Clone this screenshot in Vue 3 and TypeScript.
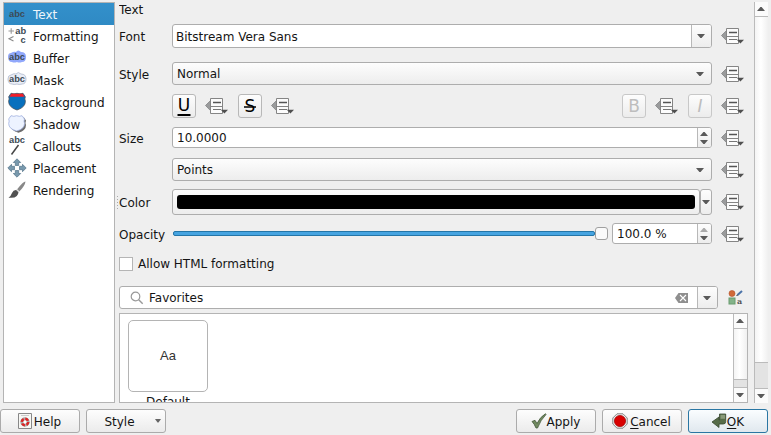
<script setup lang="ts">
import { h, type FunctionalComponent } from 'vue'

interface Section { name: string; icon: string }

const sections: Section[] = [
  { name: 'Text', icon: 'text' },
  { name: 'Formatting', icon: 'formatting' },
  { name: 'Buffer', icon: 'buffer' },
  { name: 'Mask', icon: 'mask' },
  { name: 'Background', icon: 'background' },
  { name: 'Shadow', icon: 'shadow' },
  { name: 'Callouts', icon: 'callouts' },
  { name: 'Placement', icon: 'placement' },
  { name: 'Rendering', icon: 'rendering' },
]

const Override: FunctionalComponent = () =>
  h('svg', { width: 24, height: 18, viewBox: '0 0 24 18' }, [
    h('path', { d: 'M.5 8.500L5.500 3.600v10z', fill: '#9a9b9c', stroke: '#808183', 'stroke-width': 0.8 }),
    h('path', { d: 'M5.500 1.500h12v15h-12zM5.500 9.500h12', fill: '#fcfcfc', stroke: '#858585' }),
    h('path', { d: 'M8 5.500h8', stroke: '#555', 'stroke-width': 1.500 }),
    h('path', { d: 'M8 12.500h8', stroke: '#777' }),
    h('path', { d: 'M15.800 12.800h7.200l-3.600 3.600z', fill: '#505050' }),
  ])

const Arrow: FunctionalComponent<{ up?: boolean; dim?: boolean }> = (props) =>
  h('svg', { width: 8, height: 4, viewBox: '0 0 8 4' }, [
    h('path', { d: props.up ? 'M0 4h8L4.6 0h-1.2z' : 'M0 0h8L4.6 4h-1.2z', fill: props.dim ? '#aaa' : '#5a5a5a' }),
  ])
Arrow.props = { up: Boolean, dim: Boolean }
</script>

<template>
  <div class="dialog">
    <div class="body">
      <nav class="sections">
        <div v-for="(s, i) in sections" :key="s.name" class="section" :class="{ selected: i === 0 }">
          <svg class="sicon" width="20" height="20" viewBox="0 0 20 20">
            <template v-if="s.icon === 'text'">
              <text x="10" y="13" class="abc">abc</text>
            </template>
            <template v-else-if="s.icon === 'formatting'">
              <path d="M1.500 5h5.500M4.200 2.200v5.500" stroke="#999" stroke-width="1.100" />
              <text x="13.800" y="7.500" class="abc">ab</text>
              <path d="M6.500 10.500l-4.500 2.300 4.500 2.300" fill="none" stroke="#888" stroke-width="1.100" />
              <text x="16.200" y="16.500" class="abc">c</text>
            </template>
            <template v-else-if="s.icon === 'buffer'">
              <path d="M4 5q3-2 5-1 2-3 5 0 5 0 5 5t-4 5q-3 1-5 0-3 1-5 0-4 0-4-5 0-4 3-4z" fill="#91a8fb" />
              <text x="10" y="12.400" class="abc">abc</text>
            </template>
            <template v-else-if="s.icon === 'mask'">
              <path d="M4 5q3-2 5-1 2-3 5 0 5 0 5 5t-4 5q-3 1-5 0-3 1-5 0-4 0-4-5 0-4 3-4z" fill="#e9edf6" stroke="#b0bace" stroke-width=".8" />
              <text x="10" y="12.400" class="abc">abc</text>
            </template>
            <template v-else-if="s.icon === 'background'">
              <path d="M4 1.300q3 1 6 0 3 1 6 0l2.300 3.500q-1 2 .1 4.500 0 6-8.400 8.700Q1.600 15.300 1.600 9.300q1.100-2.500.1-4.500z" fill="#0870bd" stroke="#45505b" stroke-width=".8" />
              <path d="M4.200 1.800h11.600L17.500 4.800h-15z" fill="#f21d28" />
            </template>
            <template v-else-if="s.icon === 'shadow'">
              <path d="M5 3.500q3 1.500 6 0 3 1.500 6 0l2 3q-1 2 0 4.500 0 5.500-7.500 7.800Q4 16.500 3 11z" fill="#6b6b6b" />
              <path d="M4 1.700q3 1.300 5.500 0 3 1.300 5.500 0L17.500 5q-1 2 0 4.500 0 5.500-7.800 7.500Q1.700 15 1.700 9.500q1-2.500 0-4.500z" fill="#edf3ff" stroke="#9fb0e0" stroke-width=".8" />
            </template>
            <template v-else-if="s.icon === 'callouts'">
              <text x="10" y="6.800" class="abc">abc</text>
              <path d="M11.500 9L4.500 18.500" stroke="#444" stroke-width="1.500" />
            </template>
            <template v-else-if="s.icon === 'placement'">
              <path d="M10 .8l3.700 3.700h-2v3H8.300v-3h-2zM10 19.200l3.700-3.700h-2v-3H8.300v3h-2zM.8 10l3.700-3.700v2h3v3.400h-3v2zM19.200 10l-3.700-3.700v2h-3v3.400h3v2z" fill="#7899ad" stroke="#547489" stroke-width=".7" />
            </template>
            <template v-else>
              <path d="M18.500 1.500q-2.500 0-8.500 8l2.200 2Q18 6 18.500 1.500z" fill="#888" />
              <path d="M9.500 10q-3-.5-4.500 3-1 3-3.500 4.700 6 .7 8.300-1.700 1.700-2 1.700-4z" fill="#515151" />
              <path d="M9.500 9.500l2.500 2.300" stroke="#ddd" stroke-width="1.200" />
            </template>
          </svg>
          <span>{{ s.name }}</span>
        </div>
      </nav>
      <div class="grip"></div>

      <main class="page">
        <h1>Text</h1>
        <div class="form">
          <label>Font</label>
          <div class="box white font"><span class="val edit">Bitstream Vera Sans</span><span class="drop"><Arrow /></span></div>
          <Override />

          <label>Style</label>
          <div class="box"><span class="val">Normal</span><Arrow class="inset" /></div>
          <Override />

          <span></span>
          <div class="toggles">
            <button class="tog"><svg width="22" height="22"><text x="11" y="16" class="glyph">U</text><path d="M4.500 20h13" stroke="#000" stroke-width="2" /></svg></button>
            <Override />
            <button class="tog"><svg width="22" height="22"><text x="11" y="17" class="glyph">S</text><path d="M5 12h12" stroke="#000" stroke-width="1.500" /></svg></button>
            <Override />
            <button class="tog off push"><svg width="22" height="22"><text x="11" y="17" class="glyph">B</text></svg></button>
            <Override />
            <button class="tog off"><svg width="22" height="22"><text x="11" y="17" class="glyph it">I</text></svg></button>
          </div>
          <Override />

          <label class="up">Size</label>
          <div class="box white short"><span class="val">10.0000</span><span class="spin"><Arrow up /><Arrow /></span></div>
          <Override class="high" />

          <span></span>
          <div class="box"><span class="val">Points</span><Arrow class="inset" /></div>
          <Override />

          <label class="down">Color</label>
          <div class="colour"><div class="box swatchbox"><div class="swatch"></div></div><div class="box mini"><Arrow /></div></div>
          <Override class="low" />

          <label class="up">Opacity</label>
          <div class="opacity">
            <div class="slider"><div class="track"></div><div class="thumb"></div></div>
            <div class="box white pct"><span class="val">100.0 %</span><span class="spin"><Arrow up dim /><Arrow /></span></div>
          </div>
          <Override class="high" />
        </div>

        <label class="check"><span class="cb"></span>Allow HTML formatting</label>

        <div class="searchrow">
          <div class="box white search">
            <svg class="lens" width="14" height="14" viewBox="0 0 14 14"><circle cx="5.500" cy="5.500" r="4.300" fill="none" stroke="#999" stroke-width="1.200" /><path d="M8.700 8.700l4 4" stroke="#999" stroke-width="1.400" /></svg>
            <span class="val">Favorites</span>
            <svg class="clear" width="13" height="10" viewBox="0 0 13 10"><path d="M3.500 0H13v10H3.500L0 5z" fill="#8f8f8f" /><path d="M5 2l6 6M11 2L5 8" stroke="#fff" stroke-width="1.100" /></svg>
            <span class="drop"><Arrow /></span>
          </div>
          <svg width="15" height="15" viewBox="0 0 15 15"><circle cx="4" cy="3.500" r="3" fill="#d06a3a" stroke="#b4532a" stroke-width=".6" /><path d="M9.500 5L14 1" stroke="#4a72a8" stroke-width="2" /><path d="M8 6l2.200-.5-1-1z" fill="#333" /><rect x="1" y="8" width="6" height="6" fill="#83b389" stroke="#6a9c70" /><text x="9" y="14" class="serif">a</text></svg>
        </div>

        <div class="gallery">
          <div class="cards"><div class="card">Aa</div><div class="name">Default</div></div>
          <div class="scroll inner"><span class="sb"><Arrow up /></span><span class="bar"></span><span class="groove"></span><span class="sb"><Arrow /></span></div>
        </div>
      </main>

      <div class="scroll outer"><span class="sb"><Arrow up /></span><span class="bar"></span><span class="groove"></span><span class="sb"><Arrow /></span></div>
    </div>

    <footer>
      <button class="btn">
        <svg width="14" height="16" viewBox="0 0 14 16"><path d="M.5.500h13v15H.500z" fill="#f7f7f4" stroke="#888" /><path d="M3 2.500h8" stroke="#ccc" /><circle cx="7" cy="9" r="3.200" fill="#fff" stroke="#aaa" stroke-width="3" /><circle cx="7" cy="9" r="3.200" fill="none" stroke="#dc2525" stroke-width="2.500" stroke-dasharray="3.300 1.700" /></svg>
        <span>Help</span>
      </button>
      <button class="btn style"><span>Style</span><svg width="6" height="4"><path d="M0 0h6L3.500 3.500h-1z" fill="#666" /></svg></button>
      <button class="btn apply">
        <svg width="16" height="16" viewBox="0 0 16 16"><path d="M1 8.500l3-1.200 2 3.200Q9 4 14.500.7L15 1.500Q9.500 7 6.500 15H5Q3.500 11 1 8.500z" fill="#718a60" stroke="#43583a" stroke-width=".8" /></svg>
        <span>Apply</span>
      </button>
      <button class="btn">
        <svg class="stop" width="16" height="16" viewBox="0 0 16 16"><path d="M5 .8h6L15.200 5v6L11 15.200H5L.8 11V5z" fill="#eee" stroke="#858585" /><circle cx="8" cy="8" r="5.600" fill="#d90000" stroke="#9c0000" stroke-width=".7" /></svg>
        <span><u>C</u>ancel</span>
      </button>
      <button class="btn ok">
        <svg width="16" height="16" viewBox="0 0 16 16"><path d="M8.500 1h6.200v7.500q0 2.500-2.500 2.500H8v3.500L1 9l7-5v3h.5z" fill="#566c49" stroke="#35462d" stroke-width=".8" /><path d="M9.500 1.800h4.500v4H9.500z" fill="#899a79" /></svg>
        <span><u>O</u>K</span>
      </button>
    </footer>
  </div>
</template>

<style>
body { margin: 0; background: #efefef; }
</style>

<style scoped>
* { box-sizing: border-box; }
.dialog { width: 771px; height: 435px; overflow: hidden; background: #efefef; color: #141414; font: 12px/16px "DejaVu Sans", sans-serif; }
svg { display: block; flex: none; }
button { font: inherit; color: inherit; padding: 0; }
.body { display: flex; height: 403px; padding: 2px 0 0 3px; }
.sections { width: 112px; height: 401px; border: 1px solid #b4b4b4; background: #fff; flex: none; }
.section { height: 22px; display: flex; align-items: center; padding-left: 3px; gap: 6px; }
.section span { padding-top: 2px; }
.selected { background: linear-gradient(#3390cb, #2f8ac4); color: #eef5fa; }
.abc { font: bold 9.300px "Liberation Sans", sans-serif; text-anchor: middle; fill: #3d4b54; }
.grip { width: 4px; height: 16px; margin-top: 193px; background: radial-gradient(circle at 2.500px 1.500px, #aaa .6px, transparent .8px) 0 0 / 4px 3px; flex: none; }
.page { width: 629px; height: 401px; flex: none; overflow: hidden; }
h1 { font: inherit; margin: 0; height: 22px; }
.form { display: grid; grid-template-columns: 53px 540px 33px; grid-template-rows: 38px 32px 33px 31px 31px 34px 21px; align-items: start; }
.form > svg { margin: 3px 0 0 9px; }
.form > svg.high { margin-top: 2px; }
.form > svg.low { margin-top: 4px; }
.form > label { padding-top: 5px; white-space: nowrap; }
.form > label.up { padding-top: 4px; }
.form > label.down { padding-top: 6px; }
.box { display: flex; align-items: center; height: 23px; border: 1px solid #adadad; border-radius: 3px; background: linear-gradient(#fdfdfd, #ededed); overflow: hidden; }
.white { background: #fff; }
.val { flex: 1; padding-left: 4px; white-space: nowrap; color: #141414; }
.edit { padding-left: 3px; padding-top: 1px; }
.font { height: 24px; }
.short { height: 21px; }
.inset { margin-right: 7px; }
.drop { width: 20px; height: 100%; border-left: 1px solid #b8b8b8; display: flex; align-items: center; padding-left: 5px; background: linear-gradient(#fdfdfd, #ededed); }
.spin { width: 14px; height: 100%; border-left: 1px solid #b8b8b8; display: flex; flex-direction: column; align-items: center; justify-content: center; gap: 4px; padding-right: 1px; background: linear-gradient(#fdfdfd, #ededed); }
.toggles { display: flex; align-items: center; gap: 9px; height: 24px; }
.tog { width: 24px; height: 24px; border: 1px solid #b8b8b8; border-radius: 3px; background: linear-gradient(#fdfdfd, #ececec); }
.off { border-color: #c8c8c8; }
.push { margin-left: auto; }
.glyph { font: 17px "DejaVu Sans", sans-serif; text-anchor: middle; fill: #000; }
.off .glyph { fill: #bdbdbd; }
.it { font-style: italic; }
.colour { display: flex; }
.swatchbox { width: 528px; height: 26px; padding: 0 4px; }
.swatch { height: 14px; width: 518px; background: #000; border-radius: 3px; }
.mini { width: 12px; height: 26px; justify-content: center; }
.opacity { display: flex; justify-content: space-between; height: 21px; }
.slider { width: 436px; height: 21px; display: flex; align-items: center; padding-left: 1px; }
.track { width: 422px; height: 5px; border: 1px solid #2476a8; border-radius: 2px; background: #46a4e1; }
.thumb { width: 13px; height: 13px; border: 1px solid #a0a0a0; border-radius: 3px; background: #fafafa; }
.pct { width: 100px; height: 21px; }
.check { display: flex; align-items: center; gap: 5px; height: 16px; margin-top: 12px; }
.cb { width: 14px; height: 14px; background: #fff; border: 1px solid #b5b5b5; }
.searchrow { display: flex; gap: 10px; align-items: center; height: 23px; margin-top: 14px; }
.search { width: 599px; }
.lens { margin: 0 1px 0 10px; }
.clear { margin-right: 9px; }
.serif { font: bold 8px "DejaVu Serif", serif; fill: #555; }
.gallery { display: flex; height: 90px; margin-top: 4px; border: 1px solid #b4b4b4; background: #fff; overflow: hidden; }
.cards { flex: 1; padding: 6px 0 0 8px; }
.card { width: 80px; height: 72px; border: 1px solid #b4b4b4; border-radius: 5px; display: grid; place-items: center; padding-bottom: 2px; font: 13px "Liberation Sans", sans-serif; color: #333; }
.name { width: 80px; text-align: center; margin-top: 2px; }
.scroll { display: flex; flex-direction: column; border-left: 1px solid #bbb; width: 14px; flex: none; }
.sb { height: 14px; display: flex; align-items: center; padding-left: 2px; background: #fbfbfb; flex: none; }
.bar { flex: 1; border: 1px solid #bbb; border-width: 1px 0; background: linear-gradient(90deg, #f4f4f4, #fff 45%, #f0f0f0); }
.groove { background: #e3e3e3; height: 8px; border-bottom: 1px solid #bbb; }
.outer { margin-left: 6px; height: 401px; }
.outer .groove { height: 26px; }
footer { display: flex; padding-top: 6px; gap: 6px; }
.btn { width: 80px; height: 24px; border: 1px solid #ababab; border-radius: 3px; background: linear-gradient(#fdfdfd, #ebebeb); display: flex; align-items: center; justify-content: center; gap: 2px; flex: none; padding-right: 1px; }
.btn span { padding-top: 1px; }
.btn u { text-underline-offset: 2px; }
.btn svg:first-child { margin-top: -1px; }
.btn.style { gap: 20px; padding-left: 14px; }
.apply { margin-left: 344px; }
.apply, .ok { gap: 0; }
.ok { border-color: #2a76a3; background: linear-gradient(#fafdff, #e0e8ee); }
</style>
